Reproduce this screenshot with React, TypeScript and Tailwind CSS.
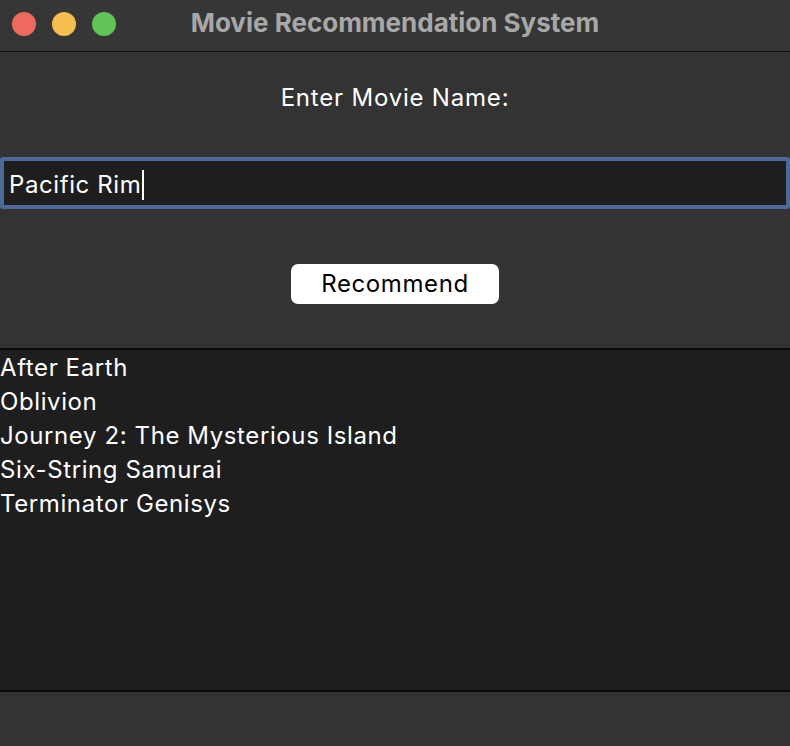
import React from "react";

export default function App() {
  const items = [
    "After Earth",
    "Oblivion",
    "Journey 2: The Mysterious Island",
    "Six-String Samurai",
    "Terminator Genisys",
  ];
  return (
    <div
      className="w-[790px] h-[746px] bg-[#333333] flex flex-col overflow-hidden"
      style={{ fontFamily: "Inter, 'Noto Sans', sans-serif" }}
    >
      <div className="h-[52px] shrink-0 bg-[#363636] relative flex items-center justify-center border-b border-[#0e0e0e]">
        <div className="absolute left-[12px] top-[12px] flex gap-[16px]">
          <div className="w-[24px] h-[24px] rounded-full bg-[#ee6a5e]" />
          <div className="w-[24px] h-[24px] rounded-full bg-[#f5bf4f]" />
          <div className="w-[24px] h-[24px] rounded-full bg-[#61c454]" />
        </div>
        <div className="text-[26px] font-bold text-[#a8a8a8] tracking-[0px] mt-[-6px]">
          Movie Recommendation System
        </div>
      </div>
      <div className="h-[296px] shrink-0 flex flex-col tracking-[0.6px]">
        <div className="h-[92px] flex items-center justify-center text-white text-[24px] tracking-[0.8px]">
          Enter Movie Name:
        </div>
        <div className="mt-[13px] h-[52px] border-[4px] border-[#4b6a99] rounded-[3px] bg-[#1e1e1e] flex items-center pl-[5px] pt-[3px] text-white text-[24px]">
          <span>Pacific Rim</span>
          <span className="ml-[1px] w-[2px] h-[30px] bg-white" />
        </div>
        <div className="flex justify-center mt-[55px]">
          <div className="w-[208px] h-[40px] bg-white rounded-[7px] flex items-center justify-center text-black text-[24px]">
            Recommend
          </div>
        </div>
      </div>
      <div className="h-[2px] bg-[#0a0a0a] shrink-0" />
      <div className="h-[340px] shrink-0 bg-[#1e1e1e] text-white text-[24px] tracking-[0.6px] flex flex-col pt-[1px]">
        {items.map((t) => (
          <div key={t} className="h-[34px] leading-[34px]">
            {t}
          </div>
        ))}
      </div>
      <div className="h-[2px] bg-[#0a0a0a] shrink-0" />
      <div className="flex-1 bg-[#333333]" />
    </div>
  );
}
